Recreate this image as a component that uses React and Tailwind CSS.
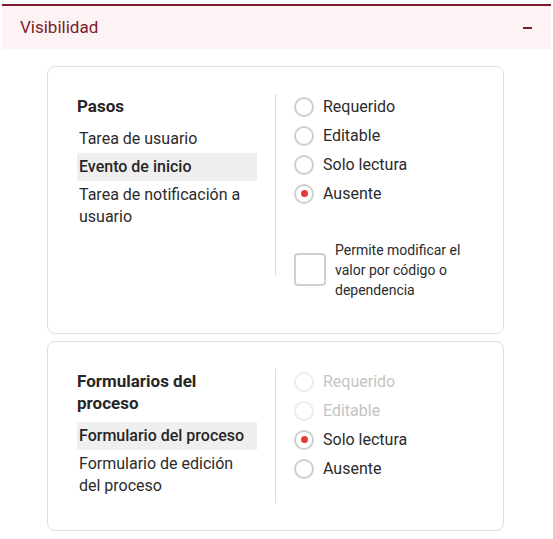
import React, { useState } from 'react';

// Radio option row used in both cards
const Radio = ({ label, checked, disabled, onSelect }) => (
    <label className={`flex items-center h-[29px] gap-[9px] ${disabled ? 'text-[#c4c4c4]' : 'text-[#2b2b2b] cursor-pointer'}`}>
        <span
            onClick={() => !disabled && onSelect(label)}
            className={`w-[20px] h-[20px] rounded-full border-2 flex items-center justify-center bg-white ${disabled ? 'border-[#ececec]' : 'border-[#cfcfcf]'}`}
        >
            {checked && <span className="w-[7px] h-[7px] rounded-full bg-[#e53935]" />}
        </span>
        <span className="text-[16px] leading-[20px]">{label}</span>
    </label>
);

const options = ['Requerido', 'Editable', 'Solo lectura', 'Ausente'];

const Card = ({ title, items, activeItem, selected, disabledOptions = [], dividerClass, extra, padClass, leftClass = '' }) => {
    const [active, setActive] = useState(activeItem);
    const [value, setValue] = useState(selected);

    return (
        <div className={`border border-[#dedede] rounded-[8px] bg-white pl-[29px] pr-[20px] ${padClass}`}>
            <div className="flex">
                {/* Left: list */}
                <div className={`w-[180px] shrink-0 ${leftClass}`}>
                    <h3 className="text-[17px] leading-[22px] font-bold text-[#262626] pt-[1px] mb-[8px]">{title}</h3>
                    <ul>
                        {items.map(item => (
                            <li
                                key={item}
                                onClick={() => setActive(item)}
                                className={`px-[2px] py-[3px] text-[16px] leading-[22px] cursor-pointer ${active === item ? 'bg-[#efefef] font-medium text-[#262626]' : 'text-[#2b2b2b]'}`}
                            >
                                {item}
                            </li>
                        ))}
                    </ul>
                </div>

                {/* Divider */}
                <div className={`w-px bg-[#dcdcdc] ml-[18px] mr-[18px] ${dividerClass}`} />

                {/* Right: options */}
                <div className="flex-1 -mt-[2px]">
                    {options.map(opt => (
                        <Radio
                            key={opt}
                            label={opt}
                            checked={value === opt}
                            disabled={disabledOptions.includes(opt)}
                            onSelect={setValue}
                        />
                    ))}
                    {extra}
                </div>
            </div>
        </div>
    );
};

const App = () => {
    const [open, setOpen] = useState(true);
    const [allowCode, setAllowCode] = useState(false);

    return (
        <div className="w-[553px] min-h-[539px] bg-white px-[2px] pt-[4px]" style={{ fontFamily: 'Roboto, "Noto Sans", sans-serif' }}>
            {/* Section header */}
            <div
                onClick={() => setOpen(!open)}
                className="flex items-center justify-between h-[45px] border-t-2 border-[#7a1b2d] bg-[#fdf3f4] pl-[18px] pr-[19px] cursor-pointer"
            >
                <span className="text-[17px] text-[#7a1b2d]">Visibilidad</span>
                <span className="w-[9px] h-[2px] bg-[#7a1b2d]" />
            </div>

            {open && (
                <div className="flex flex-col gap-[7px] pt-[17px] pl-[45px] pr-[47px]">
                    <Card
                        title="Pasos"
                        items={['Tarea de usuario', 'Evento de inicio', 'Tarea de notificación a usuario']}
                        activeItem="Evento de inicio"
                        selected="Ausente"
                        dividerClass="h-[182px]"
                        padClass="pt-[27px] pb-[33px]"
                        extra={
                            <div className="flex items-start gap-[9px] mt-[32px]">
                                <button
                                    onClick={() => setAllowCode(!allowCode)}
                                    className="w-[32px] h-[33px] shrink-0 mt-[13px] rounded-[4px] border-2 border-[#d0d0d0] bg-white"
                                />
                                <p className="text-[14px] leading-[20px] text-[#2b2b2b]">
                                    Permite modificar el valor por código o dependencia
                                </p>
                            </div>
                        }
                    />
                    <Card
                        title="Formularios del proceso"
                        items={['Formulario del proceso', 'Formulario de edición del proceso']}
                        activeItem="Formulario del proceso"
                        selected="Solo lectura"
                        disabledOptions={['Requerido', 'Editable']}
                        dividerClass="self-stretch"
                        padClass="pt-[27px] pb-[27px]"
                        leftClass="pb-[3px]"
                    />
                </div>
            )}
        </div>
    );
};

export default App;
